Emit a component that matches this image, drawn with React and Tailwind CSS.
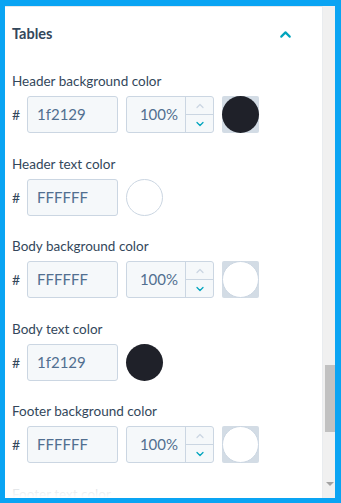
import { ChevronUp, ChevronDown } from 'lucide-react';

function HexInput({ value }) {
  return (
    <div className="w-[91px] h-[37px] bg-[#f5f8fa] border border-[#cbd6e2] rounded-[3px] flex items-center pl-[9px] text-[15px] text-[#516f90]">
      {value}
    </div>
  );
}

function Opacity() {
  return (
    <div className="w-[88px] h-[37px] bg-[#f5f8fa] border border-[#cbd6e2] rounded-[3px] flex">
      <div className="flex-1 flex items-center justify-end pr-[7px] text-[15px] text-[#516f90]">100%</div>
      <div className="w-[28px] border-l border-[#cbd6e2] flex flex-col">
        <div className="flex-1 flex items-center justify-center border-b border-[#cbd6e2]">
          <ChevronUp size={12} strokeWidth={2.5} className="text-[#cbd6e2]" />
        </div>
        <div className="flex-1 flex items-center justify-center">
          <ChevronDown size={12} strokeWidth={2.5} className="text-[#00a4bd]" />
        </div>
      </div>
    </div>
  );
}

function Swatch({ color, checker }) {
  const circle = color === 'dark'
    ? 'bg-[#1f2129]'
    : 'bg-white border border-[#cbd6e2]';
  return (
    <div className={`w-[37px] h-[37px] rounded-[2px] ${checker ? 'bg-[#d3dce5]' : ''}`}>
      <div className={`w-[37px] h-[37px] rounded-full ${circle}`} />
    </div>
  );
}

function ColorField({ label, value, swatch, opacity }) {
  return (
    <div className="mb-[20.5px]">
      <div className="h-[20px] leading-[20px] text-[13.5px] text-[#33475b]">{label}</div>
      <div className="mt-[5px] flex items-center h-[37px]">
        <span className="w-[15px] text-[14px] text-[#33475b]">#</span>
        <HexInput value={value} />
        {opacity && <div className="ml-[8px]"><Opacity /></div>}
        <div className="ml-[8px]">
          <Swatch color={swatch} checker={opacity} />
        </div>
      </div>
    </div>
  );
}

export default function App() {
  return (
    <div
      className="w-[341px] h-[503px] bg-[#0aa4f3] pl-[5px] pt-[6px] pr-[6px] pb-[5px]"
      style={{ fontFamily: 'Lato, "Noto Sans", sans-serif' }}
    >
      <div className="h-full flex bg-[#f0f0f0]">
        <div className="relative flex-1 bg-white border-t border-[#e5e8eb] border-r border-r-[#e9ecef] overflow-hidden pl-[7px] pr-[30px]">
          <div className="mt-[17px] h-[20px] flex items-center justify-between">
            <span className="text-[14.5px] font-bold text-[#33475b]">Tables</span>
            <ChevronUp size={17} strokeWidth={3} className="text-[#00a4bd] mr-[-2px]" />
          </div>
          <div className="mt-[27px]">
            <ColorField label="Header background color" value="1f2129" swatch="dark" opacity />
            <ColorField label="Header text color" value="FFFFFF" swatch="light" />
            <ColorField label="Body background color" value="FFFFFF" swatch="light" opacity />
            <ColorField label="Body text color" value="1f2129" swatch="dark" />
            <ColorField label="Footer background color" value="FFFFFF" swatch="light" opacity />
            <ColorField label="Footer text color" value="FFFFFF" swatch="light" />
          </div>
          <div className="absolute left-0 right-0 bottom-0 h-[26px] bg-gradient-to-b from-white/0 via-white/80 to-white" />
        </div>
        <div className="w-[12px] relative">
          <div className="absolute left-[2px] right-0 top-[359px] h-[67px] bg-[#c1c1c1]" />
          <div className="absolute left-[3px] bottom-[12px] w-0 h-0 border-l-[4px] border-r-[4px] border-t-[4px] border-l-transparent border-r-transparent border-t-[#a3a3a3]" />
        </div>
      </div>
    </div>
  );
}
